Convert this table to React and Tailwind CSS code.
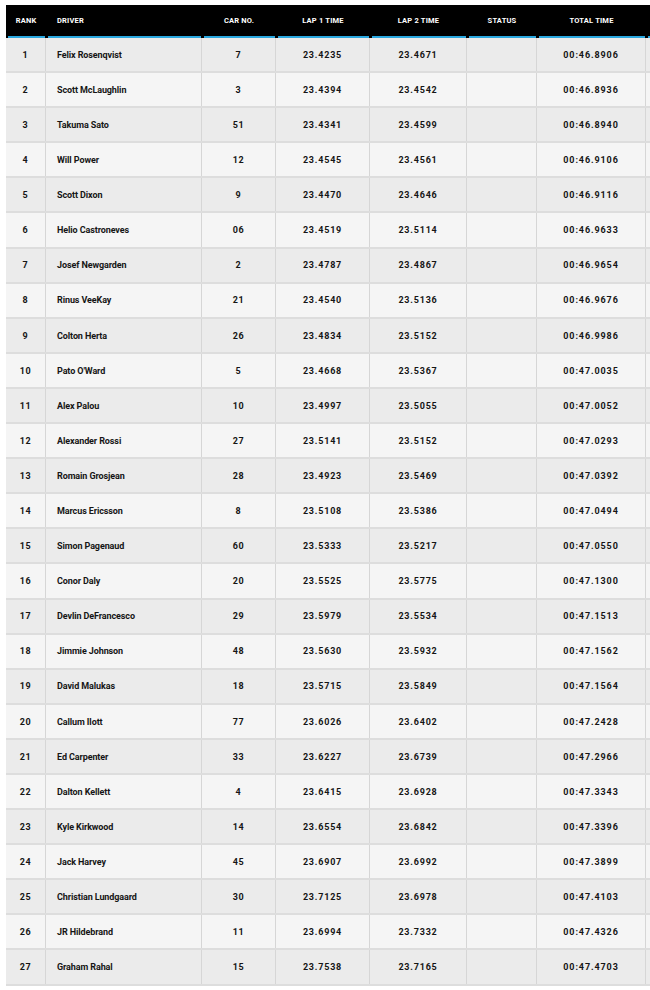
import React from 'react';

const results = [
    [1, 'Felix Rosenqvist', '7', '23.4235', '23.4671', '00:46.8906'],
    [2, 'Scott McLaughlin', '3', '23.4394', '23.4542', '00:46.8936'],
    [3, 'Takuma Sato', '51', '23.4341', '23.4599', '00:46.8940'],
    [4, 'Will Power', '12', '23.4545', '23.4561', '00:46.9106'],
    [5, 'Scott Dixon', '9', '23.4470', '23.4646', '00:46.9116'],
    [6, 'Helio Castroneves', '06', '23.4519', '23.5114', '00:46.9633'],
    [7, 'Josef Newgarden', '2', '23.4787', '23.4867', '00:46.9654'],
    [8, 'Rinus VeeKay', '21', '23.4540', '23.5136', '00:46.9676'],
    [9, 'Colton Herta', '26', '23.4834', '23.5152', '00:46.9986'],
    [10, "Pato O'Ward", '5', '23.4668', '23.5367', '00:47.0035'],
    [11, 'Alex Palou', '10', '23.4997', '23.5055', '00:47.0052'],
    [12, 'Alexander Rossi', '27', '23.5141', '23.5152', '00:47.0293'],
    [13, 'Romain Grosjean', '28', '23.4923', '23.5469', '00:47.0392'],
    [14, 'Marcus Ericsson', '8', '23.5108', '23.5386', '00:47.0494'],
    [15, 'Simon Pagenaud', '60', '23.5333', '23.5217', '00:47.0550'],
    [16, 'Conor Daly', '20', '23.5525', '23.5775', '00:47.1300'],
    [17, 'Devlin DeFrancesco', '29', '23.5979', '23.5534', '00:47.1513'],
    [18, 'Jimmie Johnson', '48', '23.5630', '23.5932', '00:47.1562'],
    [19, 'David Malukas', '18', '23.5715', '23.5849', '00:47.1564'],
    [20, 'Callum Ilott', '77', '23.6026', '23.6402', '00:47.2428'],
    [21, 'Ed Carpenter', '33', '23.6227', '23.6739', '00:47.2966'],
    [22, 'Dalton Kellett', '4', '23.6415', '23.6928', '00:47.3343'],
    [23, 'Kyle Kirkwood', '14', '23.6554', '23.6842', '00:47.3396'],
    [24, 'Jack Harvey', '45', '23.6907', '23.6992', '00:47.3899'],
    [25, 'Christian Lundgaard', '30', '23.7125', '23.6978', '00:47.4103'],
    [26, 'JR Hildebrand', '11', '23.6994', '23.7332', '00:47.4326'],
    [27, 'Graham Rahal', '15', '23.7538', '23.7165', '00:47.4703'],
];

const columns = [
    { label: 'RANK', align: 'justify-center', cell: 'tracking-[0.6px]' },
    { label: 'DRIVER', align: 'justify-start pl-[11px]', cell: 'tracking-[-0.1px]' },
    { label: 'CAR NO.', align: 'justify-center', cell: 'tracking-[0.6px]' },
    { label: 'LAP 1 TIME', align: 'justify-center', cell: 'tracking-[0.8px]' },
    { label: 'LAP 2 TIME', align: 'justify-center', cell: 'tracking-[0.8px]' },
    { label: 'STATUS', align: 'justify-center', cell: '' },
    { label: 'TOTAL TIME', align: 'justify-center', cell: 'tracking-[0.9px]' },
    { label: '', align: 'justify-center', cell: '' },
];

const gridCols = 'grid grid-cols-[40px_156px_74px_94px_97px_70px_109px_60px]';

export default function App() {
    return (
        <div className="min-h-[990px] bg-white pt-[5px] pl-[6px] font-['Roboto',sans-serif] font-bold text-[#151515]">
            <div className="w-[644px] overflow-hidden">
                <div className="w-[700px]">
                    {/* header */}
                    <div className={`${gridCols} bg-black`}>
                        {columns.map((col, i) => (
                            <div key={i} className="flex flex-col">
                                <div className={`flex h-[31px] items-center ${col.align} text-[7.5px] text-white tracking-[0.2px]`}>
                                    {col.label}
                                </div>
                                <div className="mx-[1.5px] h-[2px] bg-[#2aa8e0]" />
                            </div>
                        ))}
                    </div>

                    {/* body */}
                    {results.map((r, idx) => {
                        const cells = [r[0], r[1], r[2], r[3], r[4], '', r[5], ''];
                        return (
                            <div
                                key={r[0]}
                                className={`${gridCols} h-[35.1px] border-b-2 border-[#dddddd] ${idx % 2 === 0 ? 'bg-[#ebebeb]' : 'bg-[#f5f5f5]'}`}
                            >
                                {cells.map((c, i) => (
                                    <div
                                        key={i}
                                        className={`flex items-center pt-[2px] ${columns[i].align} ${columns[i].cell} border-r border-[#d6d6d6] text-[9px]`}
                                    >
                                        {c}
                                    </div>
                                ))}
                            </div>
                        );
                    })}
                </div>
            </div>
        </div>
    );
}
